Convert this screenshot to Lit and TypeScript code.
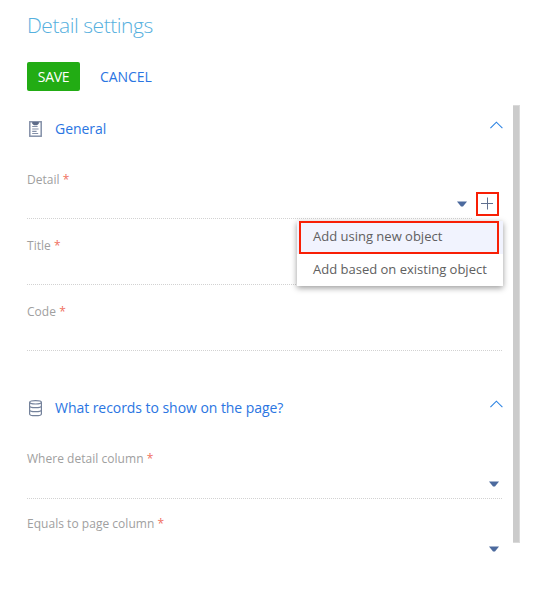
import { LitElement, html, css, svg, nothing } from "lit";
import { customElement, property } from "lit/decorators.js";

const clipboardIcon = svg`
  <rect x="0.8" y="0.8" width="11.4" height="14.4" fill="none" stroke="#8490a8" stroke-width="1.5"/>
  <path d="M3.2 1h6.6v1.8L8 4.2H5L3.2 2.8z" fill="#5d6b88"/>
  <path d="M3.2 5.5h5.4M3.2 8h6.4M3.2 10.3h4.4M3.2 12.5h6" stroke="#8490a8" stroke-width="1.2"/>`;

const databaseIcon = svg`
  <g fill="none" stroke="#74829b" stroke-width="1.2">
    <ellipse cx="6.5" cy="2.3" rx="5.9" ry="1.7"/>
    <path d="M0.6 2.3v11.6c0 1 2.6 1.8 5.9 1.8s5.9-.8 5.9-1.8V2.3"/>
    <path d="M0.6 6c0 1 2.6 1.7 5.9 1.7S12.4 7 12.4 6M0.6 10c0 1 2.6 1.7 5.9 1.7s5.9-.7 5.9-1.7"/>
  </g>`;

@customElement("section-header")
class SectionHeader extends LitElement {
  @property() label = "";
  @property() icon = "general";
  static styles = css`
    :host { display: flex; align-items: center; height: 24px; color: #2a75e2; }
    .icon { width: 13px; height: 17px; margin: 0 13px 0 2px; flex: none; }
    .label { flex: 1; font-size: 14px; line-height: 20px; white-space: nowrap; letter-spacing: -0.05px; }
    .chevron { width: 14px; height: 8px; margin: 0 0 9px 0; }
  `;
  render() {
    return html`
      <svg class="icon" viewBox="0 0 13 17">${this.icon === "general" ? clipboardIcon : databaseIcon}</svg>
      <span class="label">${this.label}</span>
      <svg class="chevron" viewBox="0 0 14 8"><path d="M1.4 7.2L7.4 1.2l6 6" fill="none" stroke="#2d83e3" stroke-width="1.1"/></svg>
    `;
  }
}

@customElement("form-field")
class FormField extends LitElement {
  @property() label = "";
  @property({ type: Boolean }) lookup = false;
  @property({ type: Boolean }) addable = false;
  @property({ type: Boolean }) last = false;
  static styles = css`
    :host { display: block; height: 66px; }
    .label { font-size: 12px; line-height: 18px; color: #a0a0a0; letter-spacing: 0.03px; white-space: nowrap; }
    .required { color: #f0705f; }
    .control { display: flex; align-items: center; height: var(--control-height, 29px); }
    .value { flex: 1; height: 100%; display: flex; justify-content: flex-end; align-items: center;
      border-bottom: 1px dotted #d2d2d2; }
    .value.last { border-bottom-color: transparent; }
    .arrow { width: 10px; height: 6px; margin: 2px 4px 0 0; }
    .value.lookup:only-child .arrow { margin-right: 3px; }
    .value.lookup:not(:only-child) .arrow { margin-right: 5px; }
    .add { box-sizing: border-box; width: 23px; height: 24px; border: 2px solid #f81f05; margin: 0 3px 0 4px; flex: none; }
    .add svg { display: block; width: 19px; height: 20px; }
  `;
  render() {
    return html`
      <div class="label">${this.label} <span class="required">*</span></div>
      <div class="control">
        <div class="value ${this.lookup ? "lookup" : ""} ${this.last ? "last" : ""}">
          ${this.lookup ? html`<svg class="arrow" viewBox="0 0 10 6"><path d="M0 .5h10L6 5.5H4z" fill="#4c6a9e"/></svg>` : nothing}
        </div>
        ${this.addable ? html`<div class="add"><svg viewBox="0 0 19 20"><path d="M3 9.5h12M9.5 3.5v12" stroke="#60708f" stroke-width="1"/></svg></div>` : nothing}
      </div>
    `;
  }
}

@customElement("app-root")
class AppRoot extends LitElement {
  static styles = css`
    :host { display: block; box-sizing: border-box; width: 540px; height: 600px; background: #fff;
      padding: 10px 20px 0 27px; overflow: hidden; font-family: "Open Sans", "Noto Sans", sans-serif; }
    h1 { margin: 0; font-size: 21px; line-height: 30px; font-weight: 300; color: #56b0de; letter-spacing: -0.46px; }
    .actions { display: flex; align-items: center; gap: 20px; margin-top: 22px; height: 29px; }
    .btn { font-size: 14px; line-height: 29px; white-space: nowrap; }
    .save { width: 53px; text-align: center; border-radius: 2px; background: #22ac14; color: #fff; letter-spacing: -0.3px; }
    .cancel { color: #2a75e2; letter-spacing: -0.05px; }
    .body { display: flex; margin-top: 14px; }
    .form { width: 475px; padding-top: 12px; }
    .form > section-header { width: 476px; }
    .fields { padding-top: 30px; position: relative; }
    .records { --control-height: 30px; }
    .records form-field { height: 65px; }
    .scroll { box-sizing: border-box; width: 7px; height: 438px; margin-left: 11px; background: #cbcbcb; border: solid #dadada; border-width: 1px 1px 1px 0; }
    .second { margin-top: 27px; }
    .menu { position: absolute; left: 270px; top: 80px; box-sizing: border-box; width: 206px; height: 65px;
      background: #fff; box-shadow: 0 2px 6px rgba(0,0,0,.4); color: #606060; font-size: 13px; }
    .item { box-sizing: border-box; height: 31px; line-height: 31px; padding-left: 16px; white-space: nowrap; }
    .active { height: 33px; background: #f1f3fe; padding: 0 4px 0 2px; }
    .mark { box-sizing: border-box; height: 33px; border: 2px solid #f81f05; line-height: 26px; padding-left: 12px; }
  `;
  render() {
    return html`
      <h1>Detail settings</h1>
      <div class="actions"><span class="btn save">SAVE</span><span class="btn cancel">CANCEL</span></div>
      <div class="body">
        <div class="form">
          <section-header label="General"></section-header>
          <div class="fields">
            <form-field label="Detail" lookup addable></form-field>
            <form-field label="Title"></form-field>
            <form-field label="Code"></form-field>
            <div class="menu">
              <div class="item active"><div class="mark">Add using new object</div></div>
              <div class="item">Add based on existing object</div>
            </div>
          </div>
          <section-header class="second" icon="records" label="What records to show on the page?"></section-header>
          <div class="fields records">
            <form-field label="Where detail column" lookup></form-field>
            <form-field label="Equals to page column" lookup last></form-field>
          </div>
        </div>
        <div class="scroll"></div>
      </div>
    `;
  }
}
